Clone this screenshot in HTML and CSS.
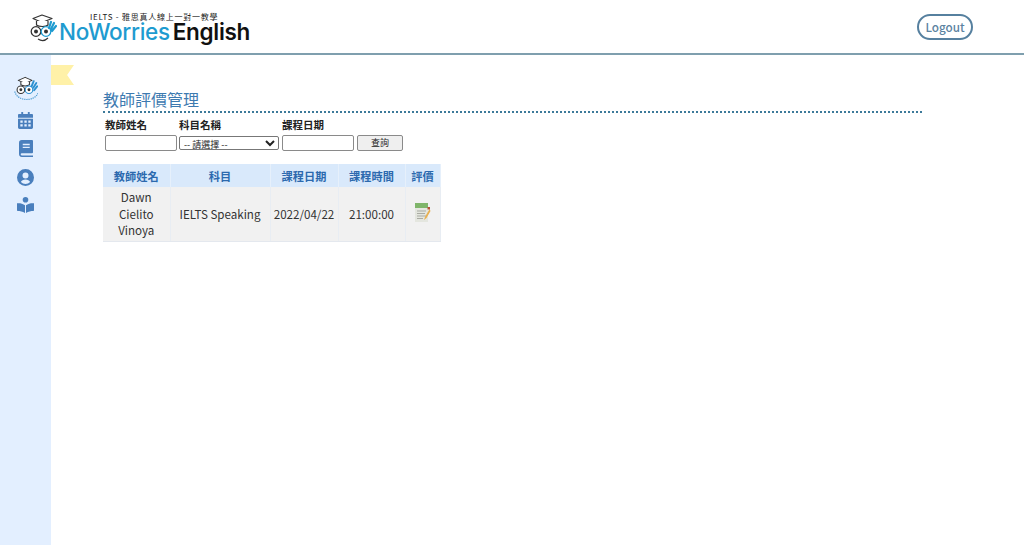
FILE: index.html
```html
<!DOCTYPE html>
<html lang="zh-Hant">
<head>
  <meta charset="UTF-8">
  <meta name="viewport" content="width=device-width, initial-scale=1.0">
  <title>教師評價管理</title>
  <link rel="stylesheet" href="styles.css">
</head>
<body>
  <header class="topbar">
    <a class="logo" href="#">
      <svg class="mascot" viewBox="1 1 27 28" width="27" height="28">
        <path d="M4 5.5 L13 2 L23 5.5 L13 9.5 Z" fill="#fff" stroke="#333" stroke-width="1.2" stroke-linejoin="round"/>
        <path d="M7.5 8 V12 C10 14 17 14 19 12 V8" fill="#fff" stroke="#333" stroke-width="1.2"/>
        <circle cx="7" cy="18.5" r="4.8" fill="#fff" stroke="#333" stroke-width="1.3"/>
        <circle cx="7" cy="18.5" r="2" fill="#333"/>
        <circle cx="17" cy="18.5" r="4.8" fill="#fff" stroke="#1e9bd0" stroke-width="1.3"/>
        <circle cx="17" cy="18.5" r="2" fill="#333"/>
        <path d="M20 15 L22 9 M22 16 L25 10 M23 18 L27 13" stroke="#1e9bd0" stroke-width="2.2" stroke-linecap="round"/>
        <path d="M9 26 C12 28 16 28 19 25" fill="none" stroke="#333" stroke-width="1.1"/>
      </svg>
      <span class="logo-text">
        <span class="logo-tag">IELTS - 雅思真人線上一對一教學</span>
        <span class="logo-name"><span class="logo-blue">NoWorries</span><span class="logo-black">English</span></span>
      </span>
    </a>
    <a class="logout" href="#">Logout</a>
  </header>

  <div class="layout">
    <aside class="sidebar">
      <svg class="side-logo" viewBox="1 1 28 29" width="24" height="25">
        <path d="M6 6 L14 2.5 L22 6 L14 9.5 Z" fill="#fff" stroke="#333" stroke-width="1.2" stroke-linejoin="round"/>
        <path d="M9 8 V11 C11 13 17 13 19 11 V8" fill="#fff" stroke="#333" stroke-width="1.2"/>
        <circle cx="9" cy="17" r="4.4" fill="#fff" stroke="#333" stroke-width="1.3"/>
        <circle cx="9" cy="17" r="1.7" fill="#333"/>
        <circle cx="18.5" cy="17" r="4.4" fill="#fff" stroke="#2a8fd0" stroke-width="1.3"/>
        <circle cx="18.5" cy="17" r="1.7" fill="#333"/>
        <path d="M21.5 13 L24 7 M23.5 14.5 L27 9 M24.5 17.5 L28 13" stroke="#2a8fd0" stroke-width="2.2" stroke-linecap="round"/>
        <path d="M2 19 C4 30 24 32 29 21" fill="none" stroke="#4a9ad0" stroke-width="1.4" stroke-dasharray="1.5 1"/>
      </svg>
      <svg class="side-icon" viewBox="0 0 16 18" width="15" height="17">
        <path d="M3.5 0 h2 v2 h5 v-2 h2 v2 H15 a1 1 0 0 1 1 1 v3 H0 V3 a1 1 0 0 1 1-1 h2.5 Z"/>
        <path fill-rule="evenodd" d="M0 7 h16 v9.5 a1.5 1.5 0 0 1-1.5 1.5 h-13 A1.5 1.5 0 0 1 0 16.5 Z M2.5 9 v2.5 h2.5 V9 Z M6.8 9 v2.5 h2.5 V9 Z M11 9 v2.5 h2.5 V9 Z M2.5 13 v2.5 h2.5 V13 Z M6.8 13 v2.5 h2.5 V13 Z M11 13 v2.5 h2.5 V13 Z"/>
      </svg>
      <svg class="side-icon" viewBox="0 0 15 18" width="14" height="17">
        <path fill-rule="evenodd" d="M3 0 H14 a1 1 0 0 1 1 1 V13 a1 1 0 0 1-1 1 H3 a1.2 1.2 0 0 0 0 2.4 H15 V18 H3 A3 3 0 0 1 0 15 V3 A3 3 0 0 1 3 0 Z M4 4 v1.4 h7.5 V4 Z M4 7 v1.4 h7.5 V7 Z"/>
      </svg>
      <svg class="side-icon" viewBox="0 0 17 17" width="17" height="17">
        <path fill-rule="evenodd" d="M8.5 0 a8.5 8.5 0 1 1 0 17 a8.5 8.5 0 0 1 0-17 Z M8.5 3.5 a3 3 0 1 0 0 6 a3 3 0 0 0 0-6 Z M8.5 10.5 c-2.2 0-4 .9-4.6 2.5 a6.2 6.2 0 0 0 9.2 0 c-.6-1.6-2.4-2.5-4.6-2.5 Z"/>
      </svg>
      <svg class="side-icon" viewBox="0 0 17 16" width="17" height="16">
        <circle cx="8.5" cy="2.8" r="2.8"/>
        <path d="M0 6.2 C3 6 6 6.6 8 8.2 V16 C5.5 14.6 3 14 .7 14 A.7 .7 0 0 1 0 13.3 Z"/>
        <path d="M17 6.2 C14 6 11 6.6 9 8.2 V16 C11.5 14.6 14 14 16.3 14 A.7 .7 0 0 0 17 13.3 Z"/>
      </svg>
    </aside>

    <main class="content">
      <div class="ribbon"></div>
      <h1 class="page-title">教師評價管理</h1>
      <form class="search-form">
        <div class="field field-name">
          <label for="teacher">教師姓名</label>
          <input type="text" id="teacher">
        </div>
        <div class="field field-subject">
          <label for="subject">科目名稱</label>
          <select id="subject">
            <option>-- 請選擇 --</option>
          </select>
        </div>
        <div class="field field-date">
          <label for="courseDate">課程日期</label>
          <input type="text" id="courseDate">
        </div>
        <button type="button" class="search-btn">查詢</button>
      </form>

      <table class="eval-table">
        <thead>
          <tr>
            <th class="col-name">教師姓名</th>
            <th class="col-subject">科目</th>
            <th class="col-date">課程日期</th>
            <th class="col-time">課程時間</th>
            <th class="col-eval">評價</th>
          </tr>
        </thead>
        <tbody>
          <tr>
            <td>Dawn Cielito Vinoya</td>
            <td>IELTS Speaking</td>
            <td>2022/04/22</td>
            <td>21:00:00</td>
            <td>
              <svg class="eval-icon" viewBox="0 0 17 21" width="17" height="21">
                <rect x="1" y="1" width="13" height="19" fill="#e4e6df"/>
                <rect x="1" y="1" width="13" height="5" fill="#7fb56a"/>
                <path d="M3 9 h9 M3 11.5 h8 M3 14 h9 M3 16.5 h6" stroke="#a9aba3" stroke-width="1"/>
                <path d="M15.5 7 L11 15 L10 18 L12.5 16 L16.5 9 Z" fill="#e8b050"/>
                <rect x="13.5" y="5" width="2.5" height="2.5" fill="#b5533a"/>
              </svg>
            </td>
          </tr>
        </tbody>
      </table>
    </main>
  </div>
</body>
</html>
```

FILE: styles.css
```css
html, body {
  height: 100%;
}
body {
  margin: 0;
  background: #fff;
  font-family: "Noto Sans CJK TC", "Noto Sans", sans-serif;
  color: #333;
  overflow: hidden;
}
a {
  text-decoration: none;
}

/* top bar */
.topbar {
  height: 55px;
  box-sizing: border-box;
  border-bottom: 2px solid #7f9fae;
  display: flex;
  justify-content: space-between;
  align-items: flex-start;
  padding: 12px 51px 0 30px;
}
.logo {
  display: flex;
  align-items: flex-start;
}
.mascot {
  margin-top: 2px;
  margin-right: 2px;
}
.logo-text {
  display: flex;
  flex-direction: column;
}
.logo-tag {
  font-size: 8px;
  line-height: 9px;
  color: #222;
  letter-spacing: 0.75px;
  padding-left: 31px;
  white-space: nowrap;
}
.logo-name {
  font-family: "Inter", sans-serif;
  font-size: 22.5px;
  line-height: 20px;
  font-weight: 500;
  letter-spacing: -0.3px;
  white-space: nowrap;
  margin-top: 1px;
}
.logo-blue {
  color: #1e9bd0;
  margin-right: 3px;
}
.logo-black {
  color: #111;
  font-weight: 600;
}
.logout {
  width: 56px;
  height: 26px;
  box-sizing: border-box;
  margin-top: 2px;
  border: 2px solid #56809f;
  border-radius: 14px;
  color: #5b83a1;
  font-size: 11.7px;
  font-weight: 500;
  line-height: 22px;
  text-align: center;
}

/* page body */
.layout {
  display: flex;
  height: calc(100% - 55px);
}
.sidebar {
  width: 51px;
  flex-shrink: 0;
  background: #e3efff;
  display: flex;
  flex-direction: column;
  align-items: center;
  padding-top: 21px;
}
.side-logo {
  margin-bottom: 11px;
}
.side-icon {
  fill: #4a7fbd;
  margin-bottom: 11.33px;
}
.content {
  position: relative;
  flex: 1;
  padding: 33px 0 0 52px;
}
.ribbon {
  position: absolute;
  left: 0;
  top: 10px;
  width: 23px;
  height: 20px;
  background: #fff1a8;
  clip-path: polygon(0 0, 100% 0, 70% 50%, 100% 100%, 0 100%);
}
.page-title {
  width: 819px;
  margin: 0 0 4px;
  font-size: 16px;
  line-height: 23px;
  font-weight: 400;
  color: #3d7ab0;
  border-bottom: 2px dotted #3d7a9a;
}

/* search */
.search-form {
  display: flex;
  align-items: flex-end;
  padding-left: 2px;
  margin-bottom: 13px;
}
.field {
  display: flex;
  flex-direction: column;
}
.field label {
  font-size: 10.5px;
  line-height: 16px;
  font-weight: 700;
  color: #222;
  margin-bottom: 2px;
}
.field input {
  width: 72px;
  height: 16px;
  box-sizing: border-box;
  padding: 0 2px;
  border: 1px solid #8a8a8a;
  border-radius: 2px;
  background: #fff;
  font-size: 10px;
}
.field select {
  width: 100px;
  height: 14px;
  box-sizing: border-box;
  margin: 1px 0;
  padding: 0;
  border: 1px solid #777;
  border-radius: 2px;
  background: #fff;
  font-family: inherit;
  font-size: 9px;
  color: #222;
}
.field-name {
  margin-right: 2px;
}
.field-subject {
  margin-right: 3px;
}
.field-date {
  margin-right: 3px;
}
.search-btn {
  width: 46px;
  height: 16px;
  box-sizing: border-box;
  padding: 0;
  border: 1px solid #8a8a8a;
  border-radius: 2px;
  background: #efefef;
  font-family: inherit;
  font-size: 9px;
  line-height: 14px;
  color: #222;
}

/* results */
.eval-table {
  width: 337px;
  border-collapse: collapse;
  table-layout: fixed;
  font-size: 11.6px;
}
.eval-table th,
.eval-table td {
  box-sizing: border-box;
}
.eval-table th {
  height: 23px;
  padding: 0;
  background: #d9e9fb;
  color: #2c69ae;
  font-size: 11.2px;
  font-weight: 700;
  border-right: 1px solid #e6f0fb;
}
.eval-table td {
  padding: 2px;
  height: 54px;
  background: #f1f1f1;
  color: #333;
  line-height: 16.5px;
  text-align: center;
  border-right: 1px solid #e8edf3;
  border-bottom: 1px solid #e4e8ee;
}
.col-name {
  width: 67px;
}
.col-subject {
  width: 100px;
}
.col-date {
  width: 68px;
}
.col-time {
  width: 67px;
}
.col-eval {
  width: 35px;
}
.eval-icon {
  display: block;
  margin: -3px auto 0;
}
```
